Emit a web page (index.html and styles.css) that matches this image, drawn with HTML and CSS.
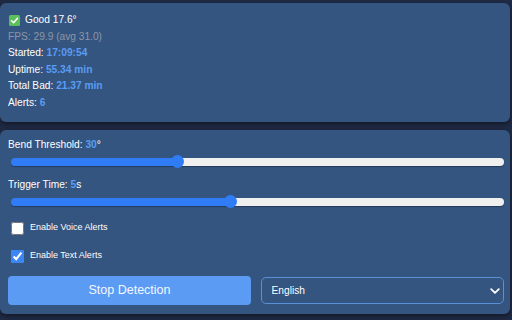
FILE: index.html
```html
<!DOCTYPE html>
<html lang="en">
<head>
<meta charset="utf-8">
<title>Posture Monitor</title>
<link rel="stylesheet" href="styles.css">
</head>
<body>
<main class="page">
  <section class="panel status">
    <div class="line good">
      <svg class="ok-icon" viewBox="0 0 11 11" aria-hidden="true">
        <rect x="0" y="0" width="11" height="11" rx="1.5" fill="#5cbf5c"/>
        <polyline points="2.6,5.8 4.6,7.8 8.5,3.3" fill="none" stroke="#ffffff" stroke-width="1.5" stroke-linecap="round" stroke-linejoin="round"/>
      </svg>
      <span>Good 17.6°</span>
    </div>
    <div class="line fps">FPS: 29.9 (avg 31.0)</div>
    <div class="line">Started: <b class="val">17:09:54</b></div>
    <div class="line">Uptime: <b class="val">55.34 min</b></div>
    <div class="line">Total Bad: <b class="val">21.37 min</b></div>
    <div class="line">Alerts: <b class="val">6</b></div>
  </section>

  <section class="panel controls">
    <div class="label">Bend Threshold: <b class="val">30</b>°</div>
    <input class="slider" type="range" min="0" max="90" value="30" style="--fill: 33.8%">
    <div class="label">Trigger Time: <b class="val">5</b>s</div>
    <input class="slider" type="range" min="1" max="10" value="5" style="--fill: 44.5%">

    <div class="checks">
      <label class="check-row"><input type="checkbox" class="check"><span>Enable Voice Alerts</span></label>
      <label class="check-row"><input type="checkbox" class="check" checked><span>Enable Text Alerts</span></label>
    </div>

    <div class="actions">
      <button class="btn-stop" type="button">Stop Detection</button>
      <div class="select-wrap">
        <select class="lang">
          <option>English</option>
        </select>
        <svg class="chev" viewBox="0 0 10 6" aria-hidden="true">
          <polyline points="1.2,1.2 5,4.8 8.8,1.2" fill="none" stroke="#ffffff" stroke-width="1.8" stroke-linecap="round" stroke-linejoin="round"/>
        </svg>
      </div>
    </div>
  </section>
</main>
</body>
</html>
```

FILE: styles.css
```css
html, body {
  margin: 0;
  padding: 0;
}

body {
  background: #1f2a44;
  font-family: "Liberation Sans", Arial, sans-serif;
  font-size: 10.2px;
  color: #ffffff;
  width: 512px;
  height: 320px;
  overflow: hidden;
}

.page {
  padding-top: 3px;
  width: 510px;
  display: flex;
  flex-direction: column;
  gap: 8px;
}

.panel {
  background: #345580;
  border-radius: 6px;
  box-shadow: 0 2px 5px rgba(0, 0, 0, 0.45);
}

.status {
  padding: 9px 8px 10px 8px;
}

.line {
  line-height: 16.6px;
  height: 16.6px;
  white-space: nowrap;
}

.good {
  display: flex;
  align-items: center;
  gap: 5px;
  padding-left: 1px;
}

.ok-icon {
  width: 11px;
  height: 11px;
  flex: none;
}

.fps {
  color: #8c96a6;
}

.val {
  color: #5b9cf4;
  font-weight: bold;
}

.controls {
  padding: 7px 6px 9px 8px;
}

.label {
  line-height: 16px;
  height: 16px;
}

.slider {
  -webkit-appearance: none;
  appearance: none;
  display: block;
  width: calc(100% - 2.5px);
  height: 8px;
  margin: 5px 0 11px 2.5px;
  padding: 0;
  border-radius: 4px;
  background: linear-gradient(to right, #2f7cf5 var(--fill), #efefef var(--fill));
  box-shadow: 0 1px 1px rgba(0, 0, 0, 0.3);
  outline: none;
}

.slider:last-of-type {
  margin-bottom: 0;
}

.slider::-webkit-slider-runnable-track {
  height: 8px;
  background: transparent;
  border: none;
}

.slider::-webkit-slider-thumb {
  -webkit-appearance: none;
  appearance: none;
  width: 13px;
  height: 13px;
  margin-top: -2.5px;
  border-radius: 50%;
  background: #2f7cf5;
  border: none;
}

.checks {
  margin-top: 14.5px;
  display: flex;
  flex-direction: column;
  gap: 12.5px;
}

.check-row {
  display: flex;
  align-items: flex-start;
  gap: 6px;
  padding-left: 3px;
  font-size: 9px;
  line-height: 12px;
}

.check-row span {
  padding-top: 1px;
}

.check {
  width: 13px;
  height: 13px;
  margin: 2px 0 0 0;
  accent-color: #3b86f5;
  flex: none;
}

.actions {
  margin-top: 13px;
  display: flex;
  align-items: center;
  gap: 10px;
}

.btn-stop {
  flex: 1;
  height: 29px;
  border: none;
  border-radius: 4px;
  background: #5b9bf4;
  color: #f4f7ff;
  font-family: "Liberation Sans", Arial, sans-serif;
  font-size: 12.5px;
  padding: 0;
}

.select-wrap {
  flex: 1;
  position: relative;
  height: 27px;
}

.lang {
  -webkit-appearance: none;
  appearance: none;
  width: 100%;
  height: 27px;
  box-sizing: border-box;
  border: 1.5px solid #5a90d8;
  border-radius: 5px;
  background: #345580;
  color: #ffffff;
  font-family: "Liberation Sans", Arial, sans-serif;
  font-size: 10.2px;
  padding: 0 0 0 9.5px;
  outline: none;
}

.chev {
  position: absolute;
  right: 4px;
  top: 11px;
  width: 10px;
  height: 6px;
}
```
